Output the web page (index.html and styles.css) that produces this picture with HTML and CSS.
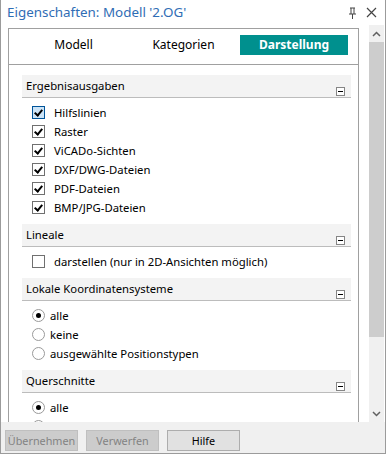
FILE: index.html
```html
<!DOCTYPE html>
<html lang="de">
<head>
    <meta charset="UTF-8">
    <title>Eigenschaften</title>
    <link rel="stylesheet" href="styles.css">
</head>
<body>
    <div class="window">
        <div class="titlebar">
            <span class="title">Eigenschaften: Modell '2.OG'</span>
            <span class="tools">
                <svg width="9" height="12" viewBox="0 0 9 12"><path d="M2 1h5M3 1v6M6 1v6M1 7h7M4.5 7v5" stroke="#444" stroke-width="1" fill="none"/></svg>
                <svg width="11" height="11" viewBox="0 0 11 11"><path d="M1 1l9 9M10 1l-9 9" stroke="#444" stroke-width="1.2" fill="none"/></svg>
            </span>
        </div>

        <div class="main">
            <div class="panel">
                <div class="tabs">
                    <div class="tab">Modell</div>
                    <div class="tab">Kategorien</div>
                    <div class="tab active">Darstellung</div>
                </div>

                <div class="content">
                    <div class="section-head">
                        <span>Ergebnisausgaben</span>
                        <span class="collapse"></span>
                    </div>
                    <div class="section-body">
                        <div class="row"><span class="check on focus"></span>Hilfslinien</div>
                        <div class="row"><span class="check on"></span>Raster</div>
                        <div class="row"><span class="check on"></span>ViCADo-Sichten</div>
                        <div class="row"><span class="check on"></span>DXF/DWG-Dateien</div>
                        <div class="row"><span class="check on"></span>PDF-Dateien</div>
                        <div class="row"><span class="check on"></span>BMP/JPG-Dateien</div>
                    </div>

                    <div class="section-head">
                        <span>Lineale</span>
                        <span class="collapse"></span>
                    </div>
                    <div class="section-body">
                        <div class="row"><span class="check"></span>darstellen (nur in 2D-Ansichten möglich)</div>
                    </div>

                    <div class="section-head">
                        <span>Lokale Koordinatensysteme</span>
                        <span class="collapse"></span>
                    </div>
                    <div class="section-body">
                        <div class="row"><span class="radio on"></span>alle</div>
                        <div class="row"><span class="radio"></span>keine</div>
                        <div class="row"><span class="radio"></span>ausgewählte Positionstypen</div>
                    </div>

                    <div class="section-head">
                        <span>Querschnitte</span>
                        <span class="collapse"></span>
                    </div>
                    <div class="section-body">
                        <div class="row"><span class="radio on"></span>alle</div>
                        <div class="row"><span class="radio"></span>keine</div>
                    </div>
                </div>
            </div>

            <div class="scrollbar">
                <div class="arrow">
                    <svg width="9" height="6" viewBox="0 0 9 6"><path d="M1 5l3.5-3.5L8 5" stroke="#606060" stroke-width="1.5" fill="none"/></svg>
                </div>
                <div class="thumb"></div>
                <div class="track"></div>
                <div class="arrow">
                    <svg width="9" height="6" viewBox="0 0 9 6"><path d="M1 1l3.5 3.5L8 1" stroke="#606060" stroke-width="1.5" fill="none"/></svg>
                </div>
            </div>
        </div>

        <div class="footer">
            <button class="btn" disabled>Übernehmen</button>
            <button class="btn" disabled>Verwerfen</button>
            <button class="btn">Hilfe</button>
        </div>
    </div>
</body>
</html>
```

FILE: styles.css
```css
html, body {
    margin: 0;
    padding: 0;
}
body {
    font-family: "Noto Sans", "Liberation Sans", sans-serif;
    font-size: 11.3px;
    color: #000;
    background: #fff;
}
.window {
    width: 386px;
    height: 454px;
    box-sizing: border-box;
    border: 1px solid #9b9b9b;
    border-top: none;
    display: flex;
    flex-direction: column;
    overflow: hidden;
}

/* Titelzeile */
.titlebar {
    height: 25px;
    flex: none;
    display: flex;
    align-items: center;
    justify-content: space-between;
    padding: 0 8px 0 6px;
}
.title {
    font-size: 13.4px;
    color: #2f6db5;
    margin-top: -2px;
}
.tools {
    display: flex;
    align-items: center;
    gap: 9px;
}

/* Hauptbereich */
.main {
    flex: 1;
    display: flex;
    min-height: 0;
}
.panel {
    width: 351px;
    box-sizing: border-box;
    margin: 3px 0 0 7px;
    border: 1px solid #a0a0a0;
    border-bottom: none;
    overflow: hidden;
}
.tabs {
    height: 36px;
    box-sizing: border-box;
    border-bottom: 1px solid #a0a0a0;
    display: grid;
    grid-template-columns: 109px 109px 109px;
    column-gap: 1px;
    padding: 6px 0 0 10px;
}
.tab {
    height: 20px;
    line-height: 20px;
    text-align: center;
    font-size: 12px;
}
.tab.active {
    background: #00908e;
    color: #fff;
    font-weight: bold;
    margin-left: 1px;
}
.content {
    padding: 10px 7px 0 13px;
}
.section-head {
    height: 23px;
    box-sizing: border-box;
    background: #f3f3f3;
    border-bottom: 1px solid #bcbcbc;
    display: flex;
    justify-content: space-between;
    padding-left: 4px;
    line-height: 22px;
}
.collapse {
    align-self: flex-end;
    width: 9px;
    height: 9px;
    box-sizing: border-box;
    border: 1px solid #858585;
    margin: 0 6px 1px 0;
    position: relative;
    background: #fff;
}
.collapse::after {
    content: "";
    position: absolute;
    left: 1px;
    top: 3px;
    width: 5px;
    height: 1px;
    background: #000;
}
.section-body {
    padding: 5px 0 7px 10px;
}
.row {
    height: 19px;
    display: flex;
    align-items: center;
}
.check {
    width: 13px;
    height: 13px;
    box-sizing: border-box;
    border: 1px solid #707070;
    background: #fff;
    margin-right: 9px;
    position: relative;
}
.check.on::after {
    content: "";
    position: absolute;
    left: 3px;
    top: 1px;
    width: 3px;
    height: 6px;
    border: solid #000;
    border-width: 0 2px 2px 0;
    transform: rotate(40deg);
}
.check.focus {
    background: #cce4f7;
    border-color: #005499;
}
.radio {
    width: 13px;
    height: 13px;
    box-sizing: border-box;
    border: 1px solid #9a9a9a;
    border-radius: 50%;
    background: #fff;
    margin-right: 5px;
    position: relative;
}
.radio.on::after {
    content: "";
    position: absolute;
    left: 3px;
    top: 3px;
    width: 5px;
    height: 5px;
    border-radius: 50%;
    background: #000;
}

/* Rollbalken */
.scrollbar {
    width: 15px;
    margin-left: 10px;
    background: #f0f0f0;
    display: flex;
    flex-direction: column;
}
.arrow {
    height: 17px;
    display: flex;
    align-items: center;
    justify-content: center;
}
.thumb {
    height: 295px;
    background: #cdcdcd;
}
.track {
    flex: 1;
}

/* Schaltflächen */
.footer {
    height: 31px;
    flex: none;
    background: #f0f0f0;
    display: flex;
    gap: 8px;
    padding: 8px 0 0 4px;
    box-sizing: border-box;
}
.btn {
    width: 73px;
    height: 21px;
    padding: 0;
    font-family: inherit;
    font-size: 10.8px;
    background: #e1e1e1;
    border: 1px solid #adadad;
    color: #000;
}
.btn:disabled {
    background: #cccccc;
    border-color: #bfbfbf;
    color: #838383;
}
```
